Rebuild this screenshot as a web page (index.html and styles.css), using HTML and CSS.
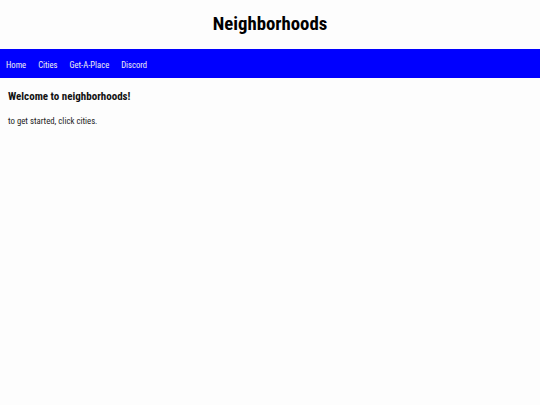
FILE: index.html
```html
<!DOCTYPE html>
<html>
<head>
<meta charset="utf-8">
<link rel="stylesheet" href="styles.css">
</head>
<body>
<header class="site-header">
  <h1 class="site-title">Neighborhoods</h1>
</header>
<nav class="nav">
  <a class="nav-link" href="#">Home</a>
  <a class="nav-link" href="#">Cities</a>
  <a class="nav-link" href="#">Get-A-Place</a>
  <a class="nav-link" href="#">Discord</a>
</nav>
<main class="content">
  <h2 class="welcome">Welcome to neighborhoods!</h2>
  <p class="intro">to get started, click cities.</p>
</main>
</body>
</html>
```

FILE: styles.css
```css
html, body {
  margin: 0;
  padding: 0;
  background: #fdfdfd;
  font-family: "Roboto Condensed", "DejaVu Sans Condensed", sans-serif;
  color: #111;
}
.site-header {
  height: 49px;
  box-sizing: border-box;
  padding-top: 14px;
  text-align: center;
}
.site-title {
  margin: 0;
  font-size: 18.8px;
  line-height: 21px;
  font-weight: bold;
  color: #000;
}
.nav {
  height: 29px;
  box-sizing: border-box;
  background: #0000ff;
  display: flex;
  align-items: center;
  padding: 2px 6px 0;
  gap: 12px;
}
.nav-link {
  color: #f0f0f0;
  text-decoration: none;
  font-size: 8.6px;
}
.content {
  padding: 12px 8px;
}
.welcome {
  margin: 0 0 11px;
  font-size: 11px;
  line-height: 14px;
  font-weight: bold;
}
.intro {
  margin: 0;
  font-size: 8.75px;
  line-height: 12px;
  color: #222;
}
```
